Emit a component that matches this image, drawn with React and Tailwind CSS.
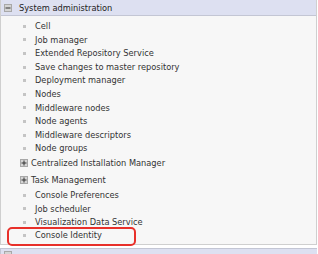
import React from 'react';

const items = [
  { label: 'Cell' },
  { label: 'Job manager' },
  { label: 'Extended Repository Service' },
  { label: 'Save changes to master repository' },
  { label: 'Deployment manager' },
  { label: 'Nodes' },
  { label: 'Middleware nodes' },
  { label: 'Node agents' },
  { label: 'Middleware descriptors' },
  { label: 'Node groups' },
  { label: 'Centralized Installation Manager', folder: true, cls: 'mt-[0.8px] h-[14px]' },
  { label: 'Task Management', folder: true, cls: 'mt-[3px] h-[14px]' },
  { label: 'Console Preferences', cls: 'mt-[1.5px] h-[13.4px]' },
  { label: 'Job scheduler', cls: 'h-[13.4px]' },
  { label: 'Visualization Data Service', cls: 'h-[13.4px]' },
  { label: 'Console Identity', cls: 'h-[13.4px]' },
];

const Toggle = ({ open }) => (
  <span className="w-[8px] h-[8px] bg-[#d4d4d4] border border-[#a8a8a8] flex items-center justify-center shrink-0">
    <svg width="6" height="6" viewBox="0 0 6 6">
      <rect x="0.5" y="2.5" width="5" height="1" fill="#333" />
      {!open && <rect x="2.5" y="0.5" width="1" height="5" fill="#333" />}
    </svg>
  </span>
);

export default function App() {
  return (
    <div
      className="relative w-[318px] h-[254px] bg-white overflow-hidden text-[#333] text-[8.25px]"
      style={{ fontFamily: '"DejaVu Sans", Verdana, sans-serif' }}
    >
      <div className="w-[317px] border-l border-r border-b border-[#cfcfcf]">
        {/* Section header */}
        <div className="h-[16px] bg-[#dde0f1] border-b border-[#c3c6d4] flex items-center gap-[7px] pl-[3px] pt-[1px]">
          <Toggle open />
          <span className="text-[#222]">System administration</span>
        </div>

        {/* Items */}
        <div className="bg-[#f7f7f7] h-[228px] pt-[3.5px]">
          {items.map((it) =>
            it.folder ? (
              <div key={it.label} className={`flex items-center gap-[3px] pl-[19px] ${it.cls}`}>
                <Toggle />
                <span className="whitespace-nowrap">{it.label}</span>
              </div>
            ) : (
              <div key={it.label} className={`flex items-center pl-[22px] ${it.cls || 'h-[13.6px]'}`}>
                <span className="w-[3px] h-[3px] bg-[#c4c4c4] mr-[9px] shrink-0" />
                <span className="whitespace-nowrap">{it.label}</span>
              </div>
            )
          )}
        </div>
      </div>

      {/* Next section header, cut off */}
      <div className="mt-[3px] w-[317px] h-[10px] bg-[#dde0f1] border-t border-l border-[#c3c6d4] pl-[3px] pt-[2px]">
        <div className="w-[8px] h-[8px] bg-[#d4d4d4] border border-[#a8a8a8]" />
      </div>

      {/* Highlight annotation */}
      <div className="absolute left-[7px] top-[227px] w-[129px] h-[19px] border-2 border-[#e8302a] rounded-[5px]" />
    </div>
  );
}
